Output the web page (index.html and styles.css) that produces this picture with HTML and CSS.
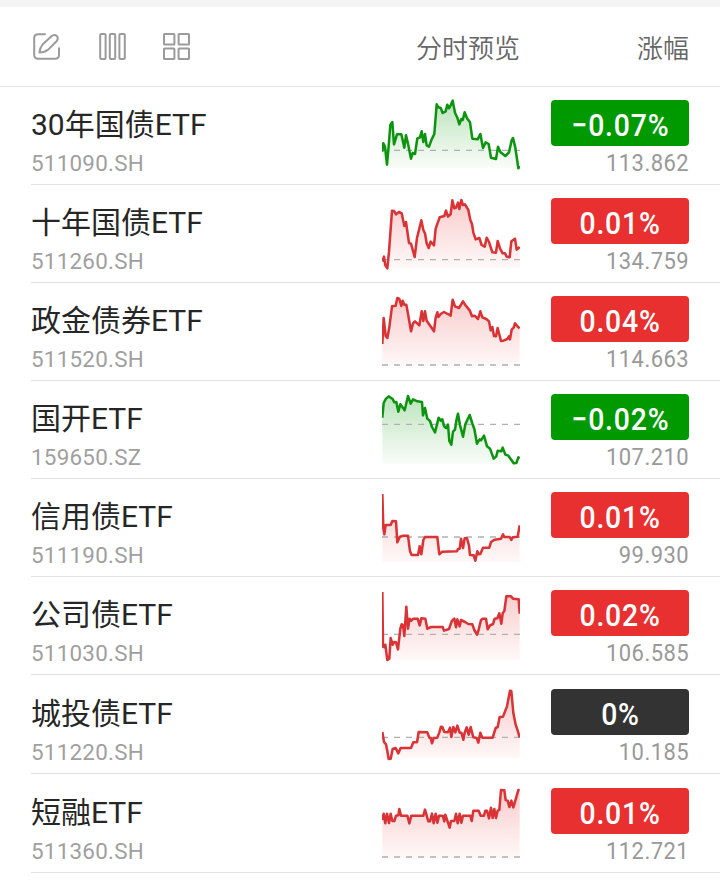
FILE: index.html
```
<!DOCTYPE html>
<html lang="zh-CN">
<head>
    <meta charset="UTF-8">
    <title>债券ETF</title>
    <link rel="stylesheet" href="styles.css">
</head>

<body>
<div class="header">
    <div class="tools">
        <svg class="icon edit" width="28" height="28" viewBox="0 0 28 28">
            <path d="M12 1.2H5.2Q1.2 1.2 1.2 5.2V21.8Q1.2 25.8 5.2 25.8H22Q26 25.8 26 21.8V15.3"/>
            <path d="M6.4 19.6Q6.8 14.6 9.8 11.3L18.2 3.4Q21.4.8 23.8 3Q26 5.4 23.3 8.5L15.2 16.6Q11.8 19.6 6.4 19.6Z"/>
        </svg>
        <svg class="icon columns" width="28" height="28" viewBox="0 0 28 28">
            <rect x="1.2" y="1" width="5.4" height="25" rx="1"/>
            <rect x="10.8" y="1" width="5.4" height="25" rx="1"/>
            <rect x="20.4" y="1" width="5.4" height="25" rx="1"/>
        </svg>
        <svg class="icon grid" width="28" height="28" viewBox="0 0 28 28">
            <rect x="1" y="1" width="10.4" height="10.6" rx=".6"/>
            <rect x="15.6" y="1" width="10.4" height="10.6" rx=".6"/>
            <rect x="1" y="15.5" width="10.4" height="10.6" rx=".6"/>
            <rect x="15.6" y="15.5" width="10.4" height="10.6" rx=".6"/>
        </svg>
    </div>
    <div class="th preview">分时预览</div>
    <div class="th change">涨幅</div>
</div>

<ul class="list" id="list">
    <li class="down">
        <div class="fund"><h3>30年国债ETF</h3><p>511090.SH</p></div>
        <svg class="chart" viewBox="21 6 414 270"></svg>
        <div class="quote"><div class="badge"><b>−0.07%</b></div><span>113.862</span></div>
    </li>
    <li class="up">
        <div class="fund"><h3>十年国债ETF</h3><p>511260.SH</p></div>
        <svg class="chart" viewBox="21 0 414 270"></svg>
        <div class="quote"><div class="badge"><b>0.01%</b></div><span>134.759</span></div>
    </li>
    <li class="up">
        <div class="fund"><h3>政金债券ETF</h3><p>511520.SH</p></div>
        <svg class="chart" viewBox="21 0 414 270"></svg>
        <div class="quote"><div class="badge"><b>0.04%</b></div><span>114.663</span></div>
    </li>
    <li class="down">
        <div class="fund"><h3>国开ETF</h3><p>159650.SZ</p></div>
        <svg class="chart" viewBox="21 0 414 270"></svg>
        <div class="quote"><div class="badge"><b>−0.02%</b></div><span>107.210</span></div>
    </li>
    <li class="up">
        <div class="fund"><h3>信用债ETF</h3><p>511190.SH</p></div>
        <svg class="chart" viewBox="21 0 414 270"></svg>
        <div class="quote"><div class="badge"><b>0.01%</b></div><span>99.930</span></div>
    </li>
    <li class="up">
        <div class="fund"><h3>公司债ETF</h3><p>511030.SH</p></div>
        <svg class="chart" viewBox="21 0 414 270"></svg>
        <div class="quote"><div class="badge"><b>0.02%</b></div><span>106.585</span></div>
    </li>
    <li class="up flat tall">
        <div class="fund"><h3>城投债ETF</h3><p>511220.SH</p></div>
        <svg class="chart" viewBox="21 0 414 270"></svg>
        <div class="quote"><div class="badge"><b>0%</b></div><span>10.185</span></div>
    </li>
    <li class="up tall">
        <div class="fund"><h3>短融ETF</h3><p>511360.SH</p></div>
        <svg class="chart" viewBox="21 -3 414 270"></svg>
        <div class="quote"><div class="badge"><b>0.01%</b></div><span>112.721</span></div>
    </li>
</ul>

<svg class="defs" width="0" height="0">
    <linearGradient id="fill-up" x1="0" y1="0" x2="0" y2="1">
        <stop offset="0" stop-color="#e83030" stop-opacity=".25"/>
        <stop offset="1" stop-color="#e83030" stop-opacity=".03"/>
    </linearGradient>
    <linearGradient id="fill-down" x1="0" y1="0" x2="0" y2="1">
        <stop offset="0" stop-color="#099909" stop-opacity=".27"/>
        <stop offset="1" stop-color="#099909" stop-opacity=".02"/>
    </linearGradient>
</svg>
<script src="chart.js"></script>
</body>
</html>
```
FILE: styles.css
```
*{
    margin: 0;
    padding: 0;
    box-sizing: border-box;
}
body{
    height: 880px;
    overflow: hidden;
    border-top: 7px solid #f4f4f4;
    background: #fff;
    font-family: Roboto, "Noto Sans CJK SC", sans-serif;
}
li{
    list-style: none;
}
.header{
    display: flex;
    height: 80px;
    padding: 0 32px;
    align-items: center;
    border-bottom: 1px solid #e6e6e6;
}
.tools{
    display: flex;
    flex: 1;
}
.icon{
    margin-left: 1px;
    fill: none;
    stroke: #9b9b9b;
    stroke-width: 2;
    stroke-linecap: round;
    stroke-linejoin: round;
}
.columns{
    margin-left: 38px;
}
.grid{
    margin-left: 36px;
}
.th{
    padding-top: 4px;
    font-size: 26px;
    line-height: 38px;
    font-weight: 350;
    color: #666;
    text-align: right;
}
.preview{
    width: 104px;
}
.change{
    width: 169px;
    margin-right: -1px;
}
.list li{
    display: flex;
    height: 98px;
    margin-left: 31px;
    padding: 0 31px 0 0;
    border-bottom: 1px solid #e2e2e2;
}
.list .tall{
    height: 99px;
}
.fund{
    flex: 1;
    padding-top: 17px;
}
.tall .fund{
    padding-top: 18px;
}
.fund h3{
    font-size: 30px;
    line-height: 42px;
    font-weight: 400;
    color: #262626;
}
.fund p{
    font-size: 22.4px;
    line-height: 26px;
    margin-top: 4px;
    letter-spacing: .25px;
    color: #9f9f9f;
}
.chart{
    width: 138px;
    height: 90px;
    margin: 5px 31px 0 0;
}
.chart .base{
    stroke: #b0b0b0;
    stroke-width: 4;
    stroke-dasharray: 18 18;
}
.chart .line{
    fill: none;
    stroke-width: 7.6;
    stroke-linejoin: round;
}
.up .line{
    stroke: #d93336;
}
.up .area{
    fill: url(#fill-up);
}
.down .line{
    stroke: #0c940f;
}
.down .area{
    fill: url(#fill-down);
}
.quote{
    width: 138px;
    padding-top: 13px;
    text-align: right;
}
.tall .quote{
    padding-top: 14px;
}
.badge{
    height: 46px;
    border-radius: 4px;
    line-height: 51px;
    text-align: center;
    color: #fff;
    background: #e83030;
}
/* 数字压窄 */
.badge b{
    display: inline-block;
    font-size: 31.5px;
    font-weight: 500;
    letter-spacing: .9px;
    transform: scaleX(.9);
}
.down .badge{
    background: #009900;
}
.flat .badge{
    background: #333;
}
.quote span{
    display: block;
    font-size: 24.4px;
    line-height: 33px;
    letter-spacing: .5px;
    transform: scaleX(.9);
    transform-origin: right;
    color: #999;
}
```
FILE: chart.js
```
//每一行的走势: base 为昨收虚线的高度, points 为折线
var charts = [
    {base:181, points:"22,185 25,160 30,170 36,224 40,180 46,105 52,96 57,163 66,133 79,133 88,173 93,136 99,161 108,206 113,189 120,192 127,145 135,142 140,124 145,156 150,132 155,166 162,170 170,148 178,132 185,43 190,52 197,54 203,69 212,64 217,44 222,55 227,46 233,32 240,68 247,83 253,103 259,87 263,90 269,67 276,85 285,97 292,146 308,148 316,132 324,174 332,157 341,162 348,203 363,207 369,170 376,186 391,198 402,187 410,151 414,144 421,173 430,235 434,228"},
    {base:209, points:"22,215 27,200 31,226 37,235 42,185 51,62 57,63 63,73 72,66 80,70 88,108 93,96 102,159 108,161 119,201 126,144 139,91 145,120 150,130 155,160 161,174 167,155 177,166 182,116 194,82 208,78 213,62 219,80 227,72 232,31 238,55 243,53 249,38 253,57 259,30 264,45 270,43 280,60 286,90 291,102 295,128 302,148 313,144 320,165 329,170 335,143 342,156 352,187 363,188 368,153 375,175 383,190 390,190 395,200 404,202 409,154 420,146 425,179 434,171"},
    {base:231, points:"22,168 26,90 32,144 37,150 43,118 51,55 62,53 67,30 73,33 79,54 83,38 88,50 94,50 99,77 108,130 114,106 120,100 133,112 140,70 145,99 150,70 155,98 177,130 182,89 187,73 190,87 197,78 207,72 224,81 227,83 233,35 240,55 252,60 264,40 270,50 284,67 291,85 299,83 309,93 316,70 322,88 334,93 342,100 347,127 352,117 357,144 363,145 368,120 378,159 385,158 397,153 402,145 405,154 410,125 416,119 420,106 427,115 434,121"},
    {base:115, points:"22,95 26,51 33,38 41,31 53,39 58,49 64,48 70,77 76,55 89,73 99,30 107,53 114,40 127,46 141,48 144,88 150,66 157,98 165,105 171,123 180,139 191,95 197,104 202,100 207,120 213,126 219,116 223,165 229,176 234,137 240,131 244,104 249,83 255,117 264,152 271,115 284,87 292,112 298,129 306,173 314,160 318,163 327,149 336,181 345,188 356,218 364,211 368,194 379,196 383,185 391,206 400,209 416,232 424,231 430,214 434,217"},
    {base:159, points:"22,30 25,132 28,151 32,123 47,123 52,111 63,112 67,175 75,158 85,155 99,155 105,202 110,213 129,213 134,187 139,211 145,168 150,159 187,159 193,211 202,203 246,202 249,195 254,194 258,164 264,192 269,163 276,163 282,185 285,213 296,214 301,230 307,202 311,211 316,210 324,191 343,191 348,174 359,167 378,164 384,151 388,159 404,159 409,168 413,160 428,158 434,124"},
    {base:157, points:"22,30 24,194 29,196 31,188 37,234 43,230 47,168 53,188 57,180 63,181 69,202 76,140 80,127 84,130 88,162 94,74 99,140 104,110 109,116 115,110 128,110 134,130 139,109 151,110 157,140 169,135 203,135 207,146 222,141 231,116 238,110 243,136 247,112 254,133 258,114 270,120 280,126 292,127 298,144 306,158 310,147 318,114 324,110 333,110 338,142 345,130 354,126 359,110 367,109 373,94 379,125 383,94 388,87 394,43 408,43 414,50 431,52 434,95"},
    {base:172, points:"22,156 27,186 33,193 37,213 41,237 47,236 53,207 62,204 70,220 77,204 108,204 115,187 126,187 131,156 157,157 163,173 167,174 171,190 176,174 187,173 193,157 198,140 202,141 208,156 219,157 225,143 229,171 235,141 241,157 247,137 254,158 259,158 265,179 269,158 275,142 281,164 287,141 295,172 305,174 310,188 316,158 322,173 353,173 362,144 368,141 374,111 384,110 396,79 405,32 409,33 415,99 422,134 428,152 434,172"},
    {base:231, points:"22,120 26,101 31,130 36,101 42,129 47,101 52,123 58,123 63,107 70,106 73,87 78,107 97,107 103,130 109,107 145,107 150,89 160,124 165,124 171,101 176,130 182,101 187,128 192,107 203,107 208,124 211,104 224,143 228,123 238,123 243,101 248,130 254,101 259,128 264,107 286,107 290,123 295,92 311,92 317,107 327,107 331,92 336,92 342,115 348,83 353,114 358,87 363,114 368,92 373,90 378,30 388,31 392,60 398,62 403,81 409,62 415,82 421,62 430,30 434,30"}
];

window.onload= function(){
    var lis= document.getElementById("list").children;
    for(var i=0;i<lis.length;i++){
        var c= charts[i];
        lis[i].querySelector(".chart").innerHTML=
            '<polygon class="area" points="22,235 '+c.points+' 434,235"/>'+
            '<path class="base" d="M21 '+c.base+'H435"/>'+
            '<polyline class="line" points="'+c.points+'"/>';
    }
}
```
